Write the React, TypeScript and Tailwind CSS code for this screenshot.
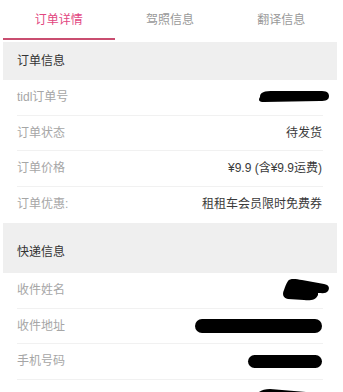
const tabs = ['订单详情', '驾照信息', '翻译信息'];

const orderRows: { label: string; value?: string; mask?: string }[] = [
  { label: 'tidl订单号', mask: 'id' },
  { label: '订单状态', value: '待发货' },
  { label: '订单价格', value: '¥9.9 (含¥9.9运费)' },
  { label: '订单优惠:', value: '租租车会员限时免费券' },
];

const expressRows: { label: string; mask: string }[] = [
  { label: '收件姓名', mask: 'name' },
  { label: '收件地址', mask: 'address' },
  { label: '手机号码', mask: 'phone' },
  { label: '', mask: 'last' },
];

// black marker strokes covering private values
function Mask({ kind }: { kind: string }) {
  if (kind === 'id')
    return (
      <svg width="76" height="14" viewBox="0 0 76 14" className="mr-[-8px] mb-[2px]">
        <path d="M6 8 C6 3 10 2 20 2 L68 2 C74 2 75 5 75 7 C75 11 72 12 66 12 L10 13 C5 13 4 11 6 8 Z" fill="#000" />
      </svg>
    );
  if (kind === 'name')
    return (
      <svg width="48" height="24" viewBox="0 0 48 24" className="mr-[-8px]">
        <path d="M6 3 C8 0 14 1 20 2 L42 6 C47 7 48 10 46 13 C44 16 40 15 36 15 L36 17 C34 22 28 23 22 22 L6 21 C1 20 0 16 2 12 C3 9 4 6 6 3 Z" fill="#000" />
      </svg>
    );
  if (kind === 'address') return <div className="h-[14px] w-[127px] rounded-full bg-black" />;
  if (kind === 'phone') return <div className="h-[13px] w-[74px] rounded-full bg-black" />;
  return (
    <svg width="76" height="14" viewBox="0 0 76 14" className="mr-[-8px] mt-[8px] self-start">
      <path d="M0 10 C3 4 8 1 16 1 L76 6 L76 14 L0 14 Z" fill="#000" />
    </svg>
  );
}

function Row({ label, children, last }: { label: string; children: React.ReactNode; last?: boolean }) {
  return (
    <div className="px-[14px]">
      <div className={'flex h-[35.5px] items-center justify-between pl-[3px] pr-[1px]' + (last ? '' : ' border-b border-[#f1f1f1]')}>
        <span className="-ml-[3px] text-[12px] text-[#a6a6a6]">{label}</span>
        <div className="flex h-full items-center text-[12px] text-[#3a3a3a]">{children}</div>
      </div>
    </div>
  );
}

export default function App() {
  return (
    <div
      className="h-[392px] w-[343px] overflow-hidden bg-white"
      style={{ fontFamily: '"Liberation Sans", "Noto Sans CJK SC", sans-serif' }}
    >
      <div className="ml-[3px] w-[334px]">
        <div className="grid h-[42px] grid-cols-3">
          {tabs.map((t, i) => (
            <div key={t} className="relative flex items-center justify-center pb-[2px]">
              <span className={'text-[12px] ' + (i === 0 ? 'text-[#e2467f]' : 'text-[#999]')}>{t}</span>
              {i === 0 && <div className="absolute bottom-[2px] left-0 right-[-1px] h-[2px] bg-[#c94d70]" />}
            </div>
          ))}
        </div>

        <div className="flex h-[38px] items-center bg-[#efefef] px-[14px] text-[12px] text-[#333]">订单信息</div>
        {orderRows.map((r, i) => (
          <Row key={r.label} label={r.label} last={i === orderRows.length - 1}>
            {r.mask ? <Mask kind={r.mask} /> : r.value}
          </Row>
        ))}

        <div className="mt-[1px] flex h-[50px] items-end bg-[#efefef] px-[14px] pb-[12px] text-[12px] text-[#333]">快递信息</div>
        {expressRows.map((r) => (
          <Row key={r.mask} label={r.label}>
            <Mask kind={r.mask} />
          </Row>
        ))}
      </div>
    </div>
  );
}
